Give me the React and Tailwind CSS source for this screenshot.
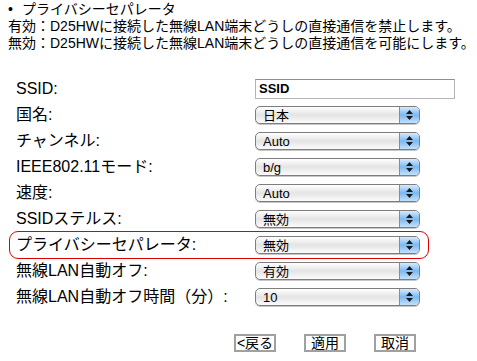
import React from 'react';

const font = { fontFamily: '"Liberation Sans", "Noto Sans CJK JP", sans-serif' };

const rows = [
  { label: 'SSID:', type: 'input', value: 'SSID' },
  { label: '国名:', value: '日本' },
  { label: 'チャンネル:', value: 'Auto' },
  { label: 'IEEE802.11モード:', value: 'b/g' },
  { label: '速度:', value: 'Auto' },
  { label: 'SSIDステルス:', value: '無効' },
  { label: 'プライバシーセパレータ:', value: '無効', highlight: true },
  { label: '無線LAN自動オフ:', value: '有効' },
  { label: '無線LAN自動オフ時間（分）:', value: '10' },
];

const Select = ({ value }) => (
  <div className="flex h-[18px] w-[165px] items-stretch overflow-hidden rounded-[5px] border border-[#7d7d7d] bg-gradient-to-b from-[#ffffff] via-[#e4e4e4] to-[#fbfbfb] shadow-[0_1px_0_#c8c8c8]">
    <span className="flex-1 pl-[7px] text-[13px] leading-[17px] text-black">{value}</span>
    <span className="flex w-[20px] flex-col items-center justify-center gap-[2px] border-l border-[#6d8fc4] bg-gradient-to-b from-[#d7eafd] via-[#7ab8f2] to-[#c3e1fd]">
      <svg width="7" height="4" viewBox="0 0 7 4"><path d="M3.5 0L7 4H0z" fill="#1a1a1a" /></svg>
      <svg width="7" height="4" viewBox="0 0 7 4"><path d="M0 0h7L3.5 4z" fill="#1a1a1a" /></svg>
    </span>
  </div>
);

const Row = ({ row }) => {
  const control =
    row.type === 'input' ? (
      <div className="h-[20px] w-[200px] border border-[#b5b5b5] border-t-[#8f8f8f] bg-white pl-[3px] text-[13px] leading-[18px] font-bold text-black">
        {row.value}
      </div>
    ) : (
      <Select value={row.value} />
    );

  if (row.highlight) {
    return (
      <div className="-my-px ml-[9px] flex h-[28px] w-[420px] items-center rounded-[9px] border border-[#e00000] pl-[6px]">
        <span className="w-[239px] text-[16px] text-black">{row.label}</span>
        {control}
      </div>
    );
  }

  return (
    <div className="flex h-[26px] items-center pl-[16px]">
      <span className="w-[239px] text-[16px] text-black">{row.label}</span>
      {control}
    </div>
  );
};

const App = () => {
  return (
    <div className="h-[361px] w-[477px] overflow-hidden bg-white" style={font}>
      <div className="pl-[8px] pt-[1px] text-[14px] leading-[17px] text-black">
        <div>
          <span className="inline-block w-[14px]">•</span>プライバシーセパレータ
        </div>
        <div>有効：D25HWに接続した無線LAN端末どうしの直接通信を禁止します。</div>
        <div>無効：D25HWに接続した無線LAN端末どうしの直接通信を可能にします。</div>
      </div>

      <div className="mt-[24px] flex flex-col">
        {rows.map((row) => (
          <Row key={row.label} row={row} />
        ))}
      </div>

      <div className="mt-[24px] flex gap-[28px] pl-[234px]">
        {['<戻る', '適用', '取消'].map((b) => (
          <button
            key={b}
            className="h-[18px] w-[42px] border-2 border-[#a0a0a0] bg-white text-[14px] leading-[14px] text-black"
          >
            {b}
          </button>
        ))}
      </div>
    </div>
  );
};

export default App;
